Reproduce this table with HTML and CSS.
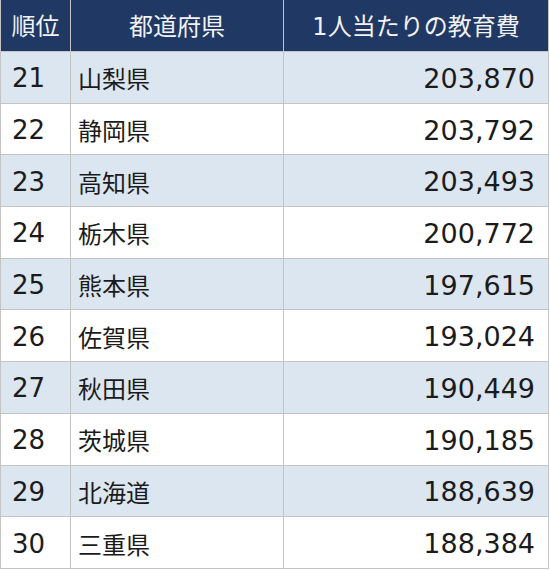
FILE: index.html
```html
<!DOCTYPE html>
<html lang="ja">
<head>
<meta charset="utf-8">
<title>1人当たりの教育費</title>
<link rel="stylesheet" href="styles.css">
</head>
<body>
<div class="table">
  <div class="cell head">順位</div>
  <div class="cell head">都道府県</div>
  <div class="cell head">1人当たりの教育費</div>

  <div class="cell rank odd">21</div><div class="cell pref odd">山梨県</div><div class="cell num odd">203,870</div>
  <div class="cell rank">22</div><div class="cell pref">静岡県</div><div class="cell num">203,792</div>
  <div class="cell rank odd">23</div><div class="cell pref odd">高知県</div><div class="cell num odd">203,493</div>
  <div class="cell rank">24</div><div class="cell pref">栃木県</div><div class="cell num">200,772</div>
  <div class="cell rank odd">25</div><div class="cell pref odd">熊本県</div><div class="cell num odd">197,615</div>
  <div class="cell rank">26</div><div class="cell pref">佐賀県</div><div class="cell num">193,024</div>
  <div class="cell rank odd">27</div><div class="cell pref odd">秋田県</div><div class="cell num odd">190,449</div>
  <div class="cell rank">28</div><div class="cell pref">茨城県</div><div class="cell num">190,185</div>
  <div class="cell rank odd">29</div><div class="cell pref odd">北海道</div><div class="cell num odd">188,639</div>
  <div class="cell rank">30</div><div class="cell pref">三重県</div><div class="cell num">188,384</div>
</div>
</body>
</html>
```
FILE: styles.css
```css
html, body {
  margin: 0;
  padding: 0;
  background: #ffffff;
}

.table {
  display: grid;
  grid-template-columns: 70px 213px 265px;
  grid-template-rows: 52px repeat(10, 51.7px);
  width: 549px;
  box-sizing: border-box;
  border-left: 1px solid #c4c4c4;
  font-family: "DejaVu Sans", "Noto Sans CJK JP", sans-serif;
  color: #1b1b1b;
}

.cell {
  box-sizing: border-box;
  border-right: 1px solid #c4c4c4;
  border-bottom: 1px solid #c4c4c4;
  display: flex;
  align-items: center;
  background: #ffffff;
  white-space: nowrap;
}

.cell.odd {
  background: #dce6f1;
}

.head {
  background: #1f3864;
  color: #f2f2f2;
  justify-content: center;
  font-family: "DejaVu Sans", "Noto Sans CJK JP", sans-serif;
  font-size: 24px;
  padding-bottom: 2px;
}

.rank {
  font-size: 26px;
  padding-left: 11px;
  padding-top: 2px;
}

.pref {
  font-family: "Noto Sans CJK JP", sans-serif;
  font-size: 24px;
  padding-left: 7px;
  padding-top: 1px;
}

.num {
  font-size: 27px;
  justify-content: flex-end;
  padding-right: 13px;
  padding-top: 2px;
}
```
